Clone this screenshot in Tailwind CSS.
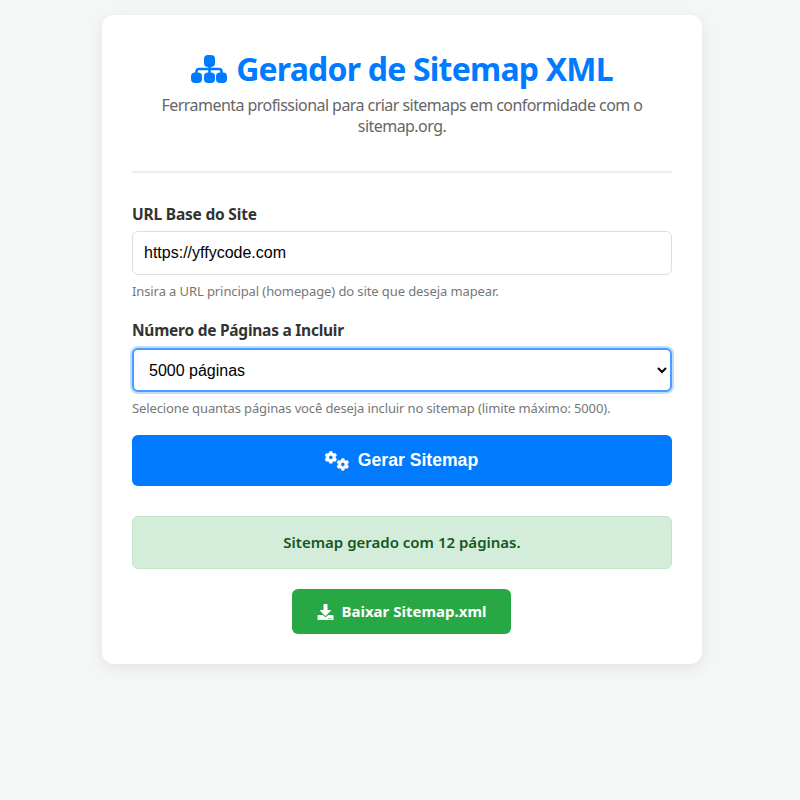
<!DOCTYPE html>
<html lang="pt-BR">
<head>
  <meta charset="UTF-8" />
  <meta name="viewport" content="width=device-width, initial-scale=1" />
  <title>Gerador de Sitemap XML</title>
  <script src="https://cdn.jsdelivr.net/npm/@tailwindcss/browser@4"></script>
</head>
<body class="bg-[#f4f7f6] min-h-screen font-['Noto_Sans',sans-serif] text-[#333]">

  <svg class="hidden">
    <defs>
      <path id="gear" d="M386.3 286.1l33.7 16.8c10.1 5.8 14.5 18.1 10.5 29.1-8.9 24.2-26.4 46.4-42.6 65.8-7.4 8.9-20.2 11.1-30.3 5.3l-29.1-16.8c-16 13.7-34.6 24.6-54.9 31.7v33.6c0 11.6-8.3 21.6-19.7 23.6-24.6 4.2-50.4 4.4-75.9 0-11.5-2-20-11.9-20-23.6V418c-20.3-7.2-38.9-18-54.9-31.7L74 403c-10 5.8-22.9 3.6-30.3-5.3-16.2-19.4-33.3-41.6-42.2-65.7-4-10.9.4-23.2 10.5-29.1l33.3-16.8c-3.9-20.9-3.9-42.4 0-63.4L12 205.8c-10.1-5.8-14.6-18.1-10.5-29 8.9-24.2 26-46.4 42.2-65.8 7.4-8.9 20.2-11.1 30.3-5.3l29.1 16.8c16-13.7 34.6-24.6 54.9-31.7V57.1c0-11.5 8.2-21.5 19.6-23.5 24.6-4.2 50.5-4.4 76-.1 11.5 2 20 11.9 20 23.6v33.6c20.3 7.2 38.9 18 54.9 31.7l29.1-16.8c10-5.8 22.9-3.6 30.3 5.3 16.2 19.4 33.2 41.6 42.1 65.8 4 10.9.1 23.2-10 29.1l-33.7 16.8c3.9 21 3.9 42.5 0 63.5zm-117.6 21.1c59.2-77-28.7-164.9-105.7-105.7-59.2 77 28.7 164.9 105.7 105.7z"/>
    </defs>
  </svg>

  <div class="w-[600px] ml-[102px] mt-[15px] bg-white rounded-[12px] shadow-[0_4px_15px_rgba(0,0,0,0.08)] p-[30px]">

    <!-- Header -->
    <div class="text-center border-b-2 border-[#eceeef] pb-[34px] mb-[30px]">
      <h1 class="flex items-center justify-center gap-[9px] h-[48px] text-[32px] tracking-[-0.8px] font-bold text-[#007bff]">
        <svg class="w-[36px] h-[28px] fill-current" viewBox="0 0 36 28">
          <rect x="13" y="0" width="11" height="12" rx="4"/>
          <rect x="0" y="17.5" width="11" height="10.5" rx="4"/>
          <rect x="13" y="17.5" width="11" height="10.5" rx="4"/>
          <rect x="25" y="17.5" width="11" height="10.5" rx="4"/>
          <path d="M5.5 19v-2.5a2.5 2.5 0 0 1 2.5-2.5h20a2.5 2.5 0 0 1 2.5 2.5V19M18.5 11v8" fill="none" stroke="currentColor" stroke-width="2.6"/>
        </svg>
        <span>Gerador de Sitemap XML</span>
      </h1>
      <p class="text-[16px] tracking-[-0.55px] leading-[21px] text-[#666] mt-[2px]">Ferramenta profissional para criar sitemaps em conformidade com o sitemap.org.</p>
    </div>

    <!-- Form -->
    <div>
      <label class="block text-[15.5px] tracking-[-0.2px] font-bold leading-[22px] mb-[6px]">URL Base do Site</label>
      <input type="text" value="https://yffycode.com" class="block w-full h-[44px] px-[11px] border border-[#dcdfe2] rounded-[6px] bg-white text-[16px] text-black font-['Liberation_Sans',sans-serif]" />
      <p class="text-[13px] tracking-[-0.1px] leading-[18px] text-[#777] mt-[7px]">Insira a URL principal (homepage) do site que deseja mapear.</p>
    </div>

    <div class="mt-[19px]">
      <label class="block text-[15.5px] tracking-[-0.25px] font-bold leading-[22px] mb-[7px]">Número de Páginas a Incluir</label>
      <select class="block w-full h-[44px] px-[11px] border-2 border-[#4a9dff] rounded-[6px] bg-white text-[16px] text-black font-['Liberation_Sans',sans-serif] shadow-[0_0_0_2px_rgba(0,123,255,0.25)] appearance-auto">
        <option>5000 páginas</option>
      </select>
      <p class="text-[13px] tracking-[-0.125px] leading-[18px] text-[#777] mt-[7px]">Selecione quantas páginas você deseja incluir no sitemap (limite máximo: 5000).</p>
    </div>

    <button class="flex items-center justify-center gap-[9px] w-full h-[51px] mt-[18px] pr-[1px] rounded-[6px] bg-[#007bff] text-white text-[17.6px] font-bold font-['Liberation_Sans',sans-serif]">
      <svg class="w-[24px] h-[20px] fill-current stroke-current stroke-[14px]" viewBox="0 0 640 512">
        <use href="#gear" transform="translate(0,-23) scale(0.72)"/>
        <use href="#gear" transform="translate(320,165) scale(0.72)"/>
      </svg>
      <span>Gerar Sitemap</span>
    </button>

    <!-- Resultado -->
    <div class="flex items-center justify-center h-[53px] mt-[30px] rounded-[6px] border border-[#c3e6cb] bg-[#d4edda] text-[#155724] text-[15px] font-semibold">
      Sitemap gerado com 12 páginas.
    </div>

    <div class="flex justify-center mt-[20px] pr-[1px]">
      <button class="flex items-center justify-center gap-[8px] w-[219px] h-[45px] rounded-[6px] bg-[#28a745] text-white text-[15px] font-bold">
        <svg class="w-[17px] h-[16px] fill-current" viewBox="0 0 512 512"><path d="M216 0h80c13.3 0 24 10.7 24 24v168h87.7c17.8 0 26.7 21.5 14.1 34.1L269.7 378.3c-7.5 7.5-19.8 7.5-27.3 0L90.1 226.1c-12.6-12.6-3.7-34.1 14.1-34.1H192V24c0-13.3 10.7-24 24-24zm296 376v112c0 13.3-10.7 24-24 24H24c-13.3 0-24-10.7-24-24V376c0-13.3 10.7-24 24-24h146.7l49 49c20.1 20.1 52.5 20.1 72.6 0l49-49H488c13.3 0 24 10.7 24 24zm-124 88c0-11-9-20-20-20s-20 9-20 20 9 20 20 20 20-9 20-20zm64 0c0-11-9-20-20-20s-20 9-20 20 9 20 20 20 20-9 20-20z"/></svg>
        <span>Baixar Sitemap.xml</span>
      </button>
    </div>
  </div>

</body>
</html>
